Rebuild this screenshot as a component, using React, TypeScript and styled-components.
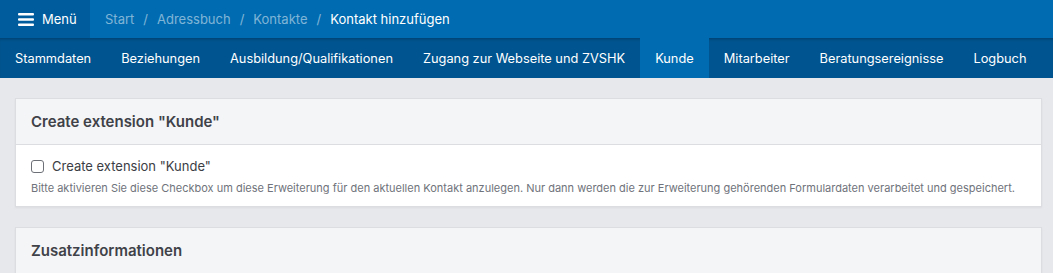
import React, { useState } from "react";
import styled, { createGlobalStyle } from "styled-components";

const GlobalStyle = createGlobalStyle`
  html, body {
    margin: 0;
    padding: 0;
    background: #e7e8eb;
    font-family: Inter, Roboto, "Liberation Sans", sans-serif;
    -webkit-font-smoothing: antialiased;
  }
  * {
    box-sizing: border-box;
  }
`;

const TopBar = styled.header`
  display: flex;
  align-items: stretch;
  height: 38px;
  background: #006bb0;
  color: #fff;
`;

const MenuButton = styled.button`
  display: flex;
  align-items: center;
  gap: 8px;
  width: 90px;
  padding: 0 0 0 18px;
  border: 0;
  background: #005c9d;
  color: #fff;
  font-family: inherit;
  font-size: 13px;
  cursor: pointer;
`;

const Breadcrumbs = styled.nav`
  display: flex;
  align-items: center;
  padding-left: 15px;
  font-size: 13px;
  white-space: nowrap;
`;

const Crumb = styled.span<{ $current?: boolean }>`
  color: ${(p) => (p.$current ? "#ffffff" : "rgba(255, 255, 255, 0.5)")};
`;

const Separator = styled.span`
  color: rgba(255, 255, 255, 0.5);
  padding: 0 9px;
`;

const TabBar = styled.nav`
  display: flex;
  height: 40px;
  background: #00548f;
  box-shadow: inset 0 3px 3px -2px rgba(0, 0, 0, 0.25);
`;

const Tab = styled.a<{ $active?: boolean }>`
  display: flex;
  align-items: center;
  padding: 0 15px;
  font-size: 12.8px;
  white-space: nowrap;
  color: #fff;
  text-decoration: none;
  cursor: pointer;
  background: ${(p) => (p.$active ? "#006bb0" : "transparent")};
`;

const Content = styled.main`
  display: flex;
  flex-direction: column;
  gap: 20px;
  padding: 20px 11px 0 15px;
`;

const Card = styled.section`
  background: #fff;
  border: 1px solid #dcdde1;
  box-shadow: 0 1px 2px rgba(0, 0, 0, 0.05);
`;

const CardHeader = styled.div<{ $open?: boolean }>`
  display: flex;
  align-items: center;
  height: ${(p) => (p.$open ? "46px" : "45px")};
  padding: 0 15px;
  background: #f4f5f7;
  border-bottom: ${(p) => (p.$open ? "1px solid #dcdde1" : "0")};
  font-size: 15px;
  font-weight: 600;
  color: #3f4248;
`;

const CardBody = styled.div`
  padding: 13px 15px 11px;
`;

const CheckRow = styled.label`
  display: flex;
  align-items: center;
  gap: 8px;
  font-size: 13px;
  color: #3b3e44;
  cursor: pointer;
`;

const Box = styled.span<{ $checked: boolean }>`
  width: 13px;
  height: 13px;
  border: 1px solid #6d7077;
  border-radius: 3px;
  background: ${(p) => (p.$checked ? "#006bb0" : "#fff")};
`;

const HiddenInput = styled.input`
  display: none;
`;

const Help = styled.p`
  margin: 7px 0 0;
  font-size: 11px;
  color: #6f737b;
`;

const Hamburger = () => (
  <svg width="16" height="13" viewBox="0 0 16 13">
    <rect x="0" y="0" width="16" height="2.4" rx="1" fill="#fff" />
    <rect x="0" y="5.3" width="16" height="2.4" rx="1" fill="#fff" />
    <rect x="0" y="10.6" width="16" height="2.4" rx="1" fill="#fff" />
  </svg>
);

const tabs = [
  "Stammdaten",
  "Beziehungen",
  "Ausbildung/Qualifikationen",
  "Zugang zur Webseite und ZVSHK",
  "Kunde",
  "Mitarbeiter",
  "Beratungsereignisse",
  "Logbuch",
];

export default function App() {
  const [checked, setChecked] = useState(false);

  return (
    <>
      <GlobalStyle />
      <TopBar>
        <MenuButton>
          <Hamburger />
          Menü
        </MenuButton>
        <Breadcrumbs>
          <Crumb>Start</Crumb>
          <Separator>/</Separator>
          <Crumb>Adressbuch</Crumb>
          <Separator>/</Separator>
          <Crumb>Kontakte</Crumb>
          <Separator>/</Separator>
          <Crumb $current>Kontakt hinzufügen</Crumb>
        </Breadcrumbs>
      </TopBar>
      <TabBar>
        {tabs.map((t) => (
          <Tab key={t} $active={t === "Kunde"}>
            {t}
          </Tab>
        ))}
      </TabBar>
      <Content>
        <Card>
          <CardHeader $open>Create extension "Kunde"</CardHeader>
          <CardBody>
            <CheckRow>
              <HiddenInput
                type="checkbox"
                checked={checked}
                onChange={() => setChecked(!checked)}
              />
              <Box $checked={checked} />
              Create extension "Kunde"
            </CheckRow>
            <Help>
              Bitte aktivieren Sie diese Checkbox um diese Erweiterung für den
              aktuellen Kontakt anzulegen. Nur dann werden die zur Erweiterung
              gehörenden Formulardaten verarbeitet und gespeichert.
            </Help>
          </CardBody>
        </Card>
        <Card>
          <CardHeader>Zusatzinformationen</CardHeader>
        </Card>
      </Content>
    </>
  );
}
